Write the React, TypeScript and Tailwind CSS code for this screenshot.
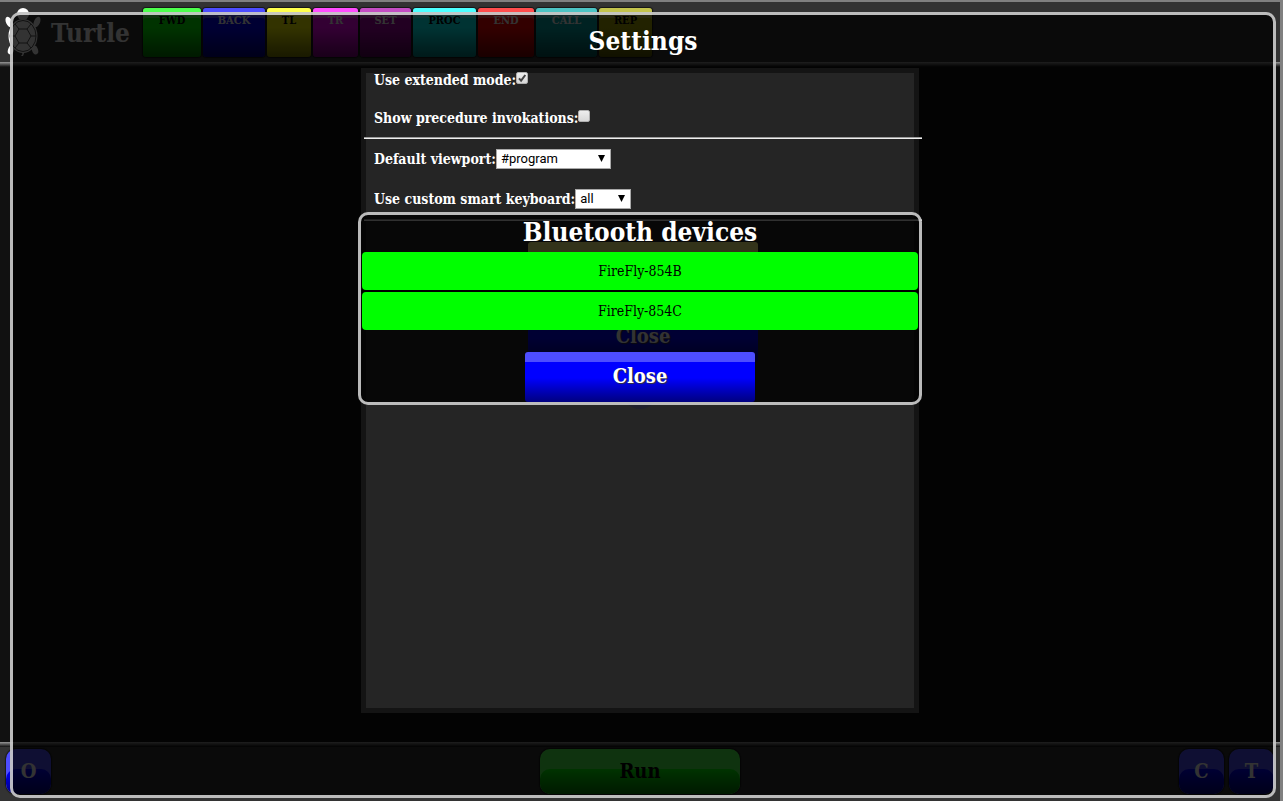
import React, { useState } from "react";

const commands = [
  { label: "FWD", style: "w-[58px] from-[#00ff00] to-[#007f00] text-black" },
  { label: "BACK", style: "w-[62px] from-[#0000ff] to-[#00007f] text-white" },
  { label: "TL", style: "w-[44px] from-[#ffff00] to-[#7f7f00] text-black" },
  { label: "TR", style: "w-[45px] from-[#ff00ff] to-[#7f007f] text-white" },
  { label: "SET", style: "w-[51px] from-[#aa00aa] to-[#550055] text-white" },
  { label: "PROC", style: "w-[63px] from-[#00ffff] to-[#007f7f] text-black" },
  { label: "END", style: "w-[56px] from-[#ff0000] to-[#7f0000] text-white" },
  { label: "CALL", style: "w-[61px] from-[#00aaaa] to-[#005555] text-white" },
  { label: "REP", style: "w-[53px] from-[#aaaa00] to-[#555500] text-black" },
];

const devices = ["FireFly-854B", "FireFly-854C"];

function TurtleLogo() {
  return (
    <svg width="40" height="50" viewBox="0 0 40 50" aria-hidden="true">
      <g fill="#fff">
        <ellipse cx="20" cy="6" rx="6" ry="6" />
        <ellipse cx="6" cy="14" rx="3" ry="5.5" transform="rotate(-24 6 14)" />
        <ellipse cx="34" cy="14" rx="3" ry="5.5" transform="rotate(24 34 14)" />
        <ellipse cx="8" cy="42" rx="3" ry="4.5" transform="rotate(20 8 42)" />
        <ellipse cx="32" cy="42" rx="3" ry="4.5" transform="rotate(-20 32 42)" />
        <path d="M18 43 L22 43 L20 48 L18 48 L19.5 46 Z" />
      </g>
      <ellipse cx="20" cy="28" rx="14.5" ry="17" fill="#fff" />
      <g fill="none" stroke="#555" strokeWidth="1">
        <ellipse cx="20" cy="28" rx="13" ry="15.5" />
        <path d="M16 21h8l4 7-4 7h-8l-4-7z M16 21l-4-5 M24 21l4-5 M28 28h5 M24 35l4 5 M16 35l-4 5 M12 28H7" />
      </g>
    </svg>
  );
}

function RoundButton({ label, style }: { label: string; style: string }) {
  return (
    <button
      className={`relative h-[45px] rounded-[10px] text-[20px] font-bold leading-[45px] shadow-[0_0_1px_1px_rgba(0,0,0,0.5)] overflow-hidden ${style}`}
    >
      <span className="relative">{label}</span>
    </button>
  );
}

function CloseButton({ onClick }: { onClick?: () => void }) {
  return (
    <button
      onClick={onClick}
      className="block h-[50px] w-[230px] rounded-[3px] border-t-[10px] border-[#4d4dff] bg-linear-to-b from-[#0000ff] from-40% to-[#000080] pb-[12px] text-[20px] leading-[28px] font-bold text-white [text-shadow:1px_1px_1px_#333]"
    >
      Close
    </button>
  );
}

function Check({ id, initial }: { id: string; initial: boolean }) {
  const [on, setOn] = useState(initial);
  return (
    <span className="relative mb-[4px] flex">
      <input
        id={id}
        type="checkbox"
        checked={on}
        onChange={() => setOn(!on)}
        className="size-[12px] appearance-none rounded-[2px] border border-[#b0b0b0] bg-linear-to-b from-[#eeeeee] to-[#d8d8d8]"
      />
      {on && (
        <svg className="pointer-events-none absolute top-0 left-0" width="12" height="12" viewBox="0 0 12 12" aria-hidden="true">
          <path d="M3 6.3 L5.1 8.6 L9.3 3" fill="none" stroke="#444" strokeWidth="2" />
        </svg>
      )}
    </span>
  );
}

function Choice({ id, value, width }: { id: string; value: string; width: string }) {
  return (
    <span className={`relative flex ${width}`}>
      <select
        id={id}
        defaultValue={value}
        className="h-[20px] w-full appearance-none border border-[#a9a9a9] bg-white pl-[4px] font-[Roboto,sans-serif] text-[13px] leading-[18px] font-normal text-black"
      >
        <option>{value}</option>
      </select>
      <svg className="pointer-events-none absolute top-[6px] right-[6px]" width="7" height="7" viewBox="0 0 7 7" aria-hidden="true">
        <path d="M0 0h7L3.5 7z" fill="#000" />
      </svg>
    </span>
  );
}

function Rule() {
  return <hr className="h-[2px] border-t border-b border-t-[#9a9a9a] border-b-[#eeeeee]" />;
}

export default function App() {
  return (
    <div className="relative flex h-screen flex-col overflow-hidden border-t-2 border-r-3 border-[#808080] bg-[#111111] font-['DejaVu_Serif_Condensed','DejaVu_Serif',serif]">
      <header>
        <div className="flex h-[60px] bg-[#333333] pt-[6px] pl-[3px]">
          <TurtleLogo />
          <h1 className="mt-[5px] ml-[8px] w-[92px] text-[26px] leading-[40px] font-bold text-white">Turtle</h1>
          <nav className="flex gap-[2px]">
            {commands.map((c) => (
              <button
                key={c.label}
                className={`flex h-[49px] justify-center rounded-[3px] bg-linear-to-b from-40% pt-[6px] text-[11px] leading-[14px] font-bold shadow-[inset_0_10px_rgba(255,255,255,0.3),0_0_1px_1px_rgba(0,0,0,0.6)] ${c.style}`}
              >
                {c.label}
              </button>
            ))}
          </nav>
        </div>
        <div className="h-[5px] bg-linear-to-b from-[#999999] to-[#111111]" />
      </header>

      <main className="flex flex-1 justify-center pt-px pb-[29px]">
        <div className="flex w-[558px] items-center justify-center border-5 border-[#646464] bg-[#b9b9b9]">
          <svg width="36" height="36" viewBox="0 0 36 36" aria-hidden="true">
            <circle cx="18" cy="18" r="18" fill="#9999dd" />
          </svg>
        </div>
      </main>

      <footer>
        <div className="h-[5px] bg-linear-to-b from-[#999999] to-[#111111]" />
        <div className="grid h-[54px] grid-cols-3 bg-[#333333] px-[6px] pt-[2px]">
          <div>
            <RoundButton label="O" style="w-[45px] text-white bg-[#4d4dff] before:absolute before:inset-x-0 before:top-[20px] before:bottom-0 before:rounded-[10px] before:bg-linear-to-b before:from-[#0000ff] before:to-[#000080]" />
          </div>
          <div className="flex justify-center">
            <RoundButton label="Run" style="w-[200px] text-black bg-[#4dff4d] before:absolute before:inset-x-0 before:top-[20px] before:bottom-0 before:rounded-[10px] before:bg-linear-to-b before:from-[#00ff00] before:to-[#008000]" />
          </div>
          <div className="flex justify-end gap-[5px]">
            <RoundButton label="C" style="w-[45px] text-white bg-[#4d4dff] before:absolute before:inset-x-0 before:top-[20px] before:bottom-0 before:rounded-[10px] before:bg-linear-to-b before:from-[#0000ff] before:to-[#000080]" />
            <RoundButton label="T" style="w-[45px] text-white bg-[#4d4dff] before:absolute before:inset-x-0 before:top-[20px] before:bottom-0 before:rounded-[10px] before:bg-linear-to-b before:from-[#0000ff] before:to-[#000080]" />
          </div>
        </div>
      </footer>

      <section className="absolute top-[10px] right-[4px] bottom-[3px] left-[10px] rounded-[10px] border-3 border-white/73 bg-black/80 text-white">
        <h2 className="pt-[6px] text-center text-[26px] leading-[40px] font-bold">Settings</h2>
        <div className="mx-auto w-[558px] text-[14px] font-bold">
          <div className="flex h-[38px] items-center pl-[10px]">
            <label htmlFor="extended">Use extended mode:</label>
            <Check id="extended" initial={true} />
          </div>
          <div className="flex h-[38px] items-center pl-[10px]">
            <label htmlFor="invocations">Show precedure invokations:</label>
            <Check id="invocations" initial={false} />
          </div>
          <Rule />
          <div className="flex h-[40px] items-center pl-[10px]">
            <label htmlFor="viewport">Default viewport:</label>
            <Choice id="viewport" value="#program" width="w-[115px]" />
          </div>
          <div className="flex h-[40px] items-center pl-[10px]">
            <label htmlFor="keyboard">Use custom smart keyboard:</label>
            <Choice id="keyboard" value="all" width="w-[56px]" />
          </div>
          <Rule />
          <div className="flex flex-col items-center pt-[21px]">
            <div className="h-[50px] w-[230px] rounded-[3px] border-t-[10px] border-[#ffff80] bg-linear-to-b from-[#ffff00] to-[#808000]" />
            <div className="pt-[20px]">
              <CloseButton />
            </div>
          </div>
        </div>
      </section>

      <section className="absolute top-[210px] left-1/2 w-[564px] -translate-x-1/2 rounded-[10px] border-3 border-white/73 bg-black/80 text-white">
        <h2 className="text-center text-[26px] leading-[34px] font-bold">Bluetooth devices</h2>
        <ul className="mx-px mt-[3px] flex flex-col gap-[2px] bg-black">
          {devices.map((d) => (
            <li key={d} className="flex">
              <button className="h-[38px] w-full rounded-[4px] bg-[#00ff00] text-[14px] text-black">{d}</button>
            </li>
          ))}
        </ul>
        <div className="flex justify-center pt-[22px]">
          <CloseButton />
        </div>
      </section>
    </div>
  );
}
